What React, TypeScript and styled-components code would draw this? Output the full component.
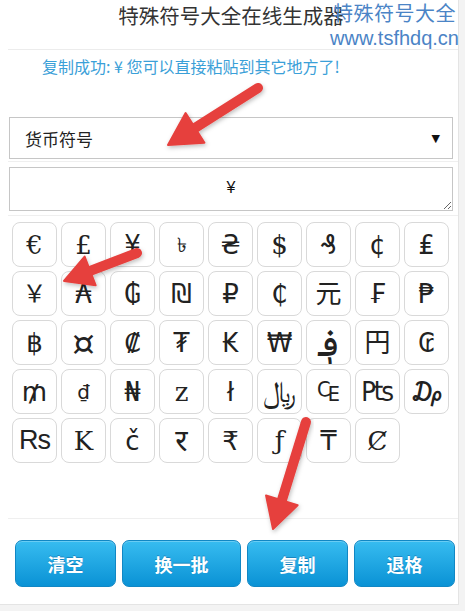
import React from "react";
import styled, { createGlobalStyle } from "styled-components";

const Global = createGlobalStyle`
  html, body { margin: 0; padding: 0; background: #f3f3f3; }
  body { font-family: "Liberation Sans", "Noto Sans CJK SC", Arial, sans-serif; }
  * { box-sizing: border-box; }
`;

const Page = styled.div`
  position: relative;
  width: 465px;
  height: 611px;
  overflow: hidden;
`;

const Panel = styled.div`
  width: 459px;
  height: 605px;
  background: #fff;
  border-right: 1px solid #e4e4e4;
  border-bottom: 1px solid #e4e4e4;
`;

const Content = styled.div`
  margin-left: 8px;
  display: flex;
  flex-direction: column;
`;

const Header = styled.div`
  height: 50px;
  border-bottom: 1px solid #ececec;
  display: flex;
  justify-content: center;
  padding-top: 3px;
  padding-right: 4px;
`;

const Title = styled.h1`
  margin: 0;
  font-family: "Noto Sans CJK SC", sans-serif;
  font-weight: 400;
  font-size: 20.5px;
  line-height: 24px;
  color: #333;
`;

const Message = styled.div`
  padding: 8px 0 0 34px;
  height: 67px;
  font-family: "Noto Sans CJK SC", sans-serif;
  font-size: 16px;
  line-height: 17px;
  color: #3aa0d8;
`;

const Row = styled.div<{ $top: number; $bottom: number }>`
  padding-top: ${(p) => p.$top}px;
  padding-bottom: ${(p) => p.$bottom}px;
  border-bottom: 1px solid #efefef;
`;

const SelectBox = styled.div`
  margin-left: 1px;
  width: 444px;
  height: 42px;
  border: 1px solid #c6c6c6;
  display: flex;
  align-items: center;
  justify-content: space-between;
  padding: 0 12px 0 15px;
  font-family: "Noto Sans CJK SC", sans-serif;
  font-size: 17px;
  color: #222;
`;

const Caret = styled.span`
  font-size: 11px;
  color: #111;
  font-family: "DejaVu Sans", sans-serif;
`;

const Output = styled.textarea`
  display: block;
  margin-left: 1px;
  width: 444px;
  height: 44px;
  border: 1px solid #c6c6c6;
  border-radius: 0;
  text-align: center;
  padding: 11px 0 0;
  font-family: "Liberation Sans", sans-serif;
  font-size: 16px;
  color: #111;
  outline: none;
  resize: both;
`;

const Grid = styled.div`
  display: grid;
  grid-template-columns: repeat(9, 45px);
  grid-auto-rows: 45px;
  gap: 4px;
  padding: 6px 0 55px 4px;
  border-bottom: 1px solid #efefef;
`;

const Cell = styled.div<{ $serif?: boolean; $size?: number }>`
  border: 1px solid #d9d9d9;
  border-radius: 8px;
  display: flex;
  align-items: center;
  justify-content: center;
  overflow: hidden;
  font-family: ${(p) =>
    p.$serif
      ? `"DejaVu Serif", "Liberation Serif", "Noto Sans CJK SC", serif`
      : `"DejaVu Sans", "Liberation Sans", "Noto Sans", "Noto Sans CJK SC", sans-serif`};
  font-size: ${(p) => p.$size ?? 26}px;
  color: #222;
  line-height: 1;
`;

const ButtonRow = styled.div`
  display: flex;
  gap: 6px;
  padding: 21px 0 0 7px;
`;

const Button = styled.button<{ $w: number }>`
  width: ${(p) => p.$w}px;
  height: 47px;
  border: 1px solid #1187c4;
  border-radius: 7px;
  background: linear-gradient(#37bcf0, #0a92d5);
  color: #fff;
  font-family: "Noto Sans CJK SC", sans-serif;
  font-weight: 700;
  font-size: 18px;
  text-shadow: 0 -1px 0 rgba(0, 60, 120, 0.35);
  box-shadow: inset 0 1px 0 rgba(255, 255, 255, 0.25);
  cursor: pointer;
`;

const Watermark = styled.div`
  position: absolute;
  top: 1px;
  right: 9px;
  display: flex;
  flex-direction: column;
  align-items: flex-end;
  color: #4b84c6;
`;

const WmTitle = styled.div`
  font-family: "Noto Sans CJK SC", sans-serif;
  font-size: 20px;
  letter-spacing: 0.5px;
  line-height: 24px;
`;

const WmUrl = styled.div`
  font-family: "Liberation Sans", sans-serif;
  font-size: 20px;
  line-height: 24px;
  margin-top: 1px;
  margin-right: -3px;
`;

const Overlay = styled.svg`
  position: absolute;
  left: 0;
  top: 0;
  pointer-events: none;
`;

type Sym = { c: string; serif?: boolean; size?: number; sans?: boolean };
const symbols: Sym[] = [
  { c: "€", serif: true }, { c: "£", serif: true }, { c: "¥" }, { c: "৳", size: 20 }, { c: "₴" },
  { c: "$", serif: true }, { c: "₰" }, { c: "¢" }, { c: "₤" },
  { c: "￥", serif: true, size: 24 }, { c: "₳" }, { c: "₲" }, { c: "₪" }, { c: "₽" },
  { c: "₵" }, { c: "元", serif: true, size: 26 }, { c: "₣" }, { c: "₱" },
  { c: "฿" }, { c: "¤", serif: true, size: 36 }, { c: "₡" }, { c: "₮" }, { c: "₭" },
  { c: "₩" }, { c: "؋", size: 38 }, { c: "円", serif: true, size: 26 }, { c: "₢" },
  { c: "₥" }, { c: "₫", size: 20 }, { c: "₦" }, { c: "z", serif: true }, { c: "ł" },
  { c: "﷼", size: 30 }, { c: "₠" }, { c: "₧" }, { c: "₯" },
  { c: "Rs", sans: true, size: 27 }, { c: "K", serif: true }, { c: "č" }, { c: "र", size: 30 }, { c: "₹" },
  { c: "ƒ", serif: true }, { c: "₸" }, { c: "Ȼ", serif: true },
];

const SansCell = styled(Cell)`
  font-family: "Liberation Sans", Arial, sans-serif;
  letter-spacing: -1px;
`;

const Arrow: React.FC<{ x1: number; y1: number; x2: number; y2: number; head?: number }> = ({
  x1, y1, x2, y2, head = 30,
}) => {
  const dx = x2 - x1;
  const dy = y2 - y1;
  const len = Math.hypot(dx, dy);
  const ux = dx / len;
  const uy = dy / len;
  const px = -uy;
  const py = ux;
  const bx = x2 - ux * head;
  const by = y2 - uy * head;
  const hw = head * 0.55;
  const pts = `${x2},${y2} ${bx + px * hw},${by + py * hw} ${bx - px * hw},${by - py * hw}`;
  return (
    <g filter="url(#sh)">
      <line x1={x1} y1={y1} x2={bx + ux * 2} y2={by + uy * 2} stroke="#e6403d" strokeWidth={10} strokeLinecap="round" />
      <polygon points={pts} fill="#e6403d" stroke="#e6403d" strokeWidth={2} strokeLinejoin="round" />
    </g>
  );
};

export default function App() {
  return (
    <>
      <Global />
      <Page>
        <Panel>
          <Content>
            <Header>
              <Title>特殊符号大全在线生成器</Title>
            </Header>
            <Message>复制成功: ¥ 您可以直接粘贴到其它地方了!</Message>
            <Row $top={0} $bottom={2}>
              <SelectBox>
                <span>货币符号</span>
                <Caret>▼</Caret>
              </SelectBox>
            </Row>
            <Row $top={5} $bottom={4}>
              <Output readOnly value="¥" />
            </Row>
            <Grid>
              {symbols.map((s, i) =>
                s.sans ? (
                  <SansCell key={i} $size={s.size}>
                    {s.c}
                  </SansCell>
                ) : (
                  <Cell key={i} $serif={s.serif} $size={s.size}>
                    {s.c}
                  </Cell>
                )
              )}
            </Grid>
            <ButtonRow>
              <Button $w={101}>清空</Button>
              <Button $w={119}>换一批</Button>
              <Button $w={101}>复制</Button>
              <Button $w={101}>退格</Button>
            </ButtonRow>
          </Content>
        </Panel>
        <Watermark>
          <WmTitle>特殊符号大全</WmTitle>
          <WmUrl>www.tsfhdq.cn</WmUrl>
        </Watermark>
        <Overlay width={465} height={611} viewBox="0 0 465 611">
          <defs>
            <filter id="sh" x="-20%" y="-20%" width="140%" height="140%">
              <feDropShadow dx="1" dy="2" stdDeviation="2" floodColor="#000" floodOpacity="0.25" />
            </filter>
          </defs>
          <Arrow x1={258} y1={88} x2={168} y2={145} head={32} />
          <Arrow x1={137} y1={253} x2={64} y2={281} head={28} />
          <Arrow x1={306} y1={422} x2={273} y2={529} head={30} />
        </Overlay>
      </Page>
    </>
  );
}
